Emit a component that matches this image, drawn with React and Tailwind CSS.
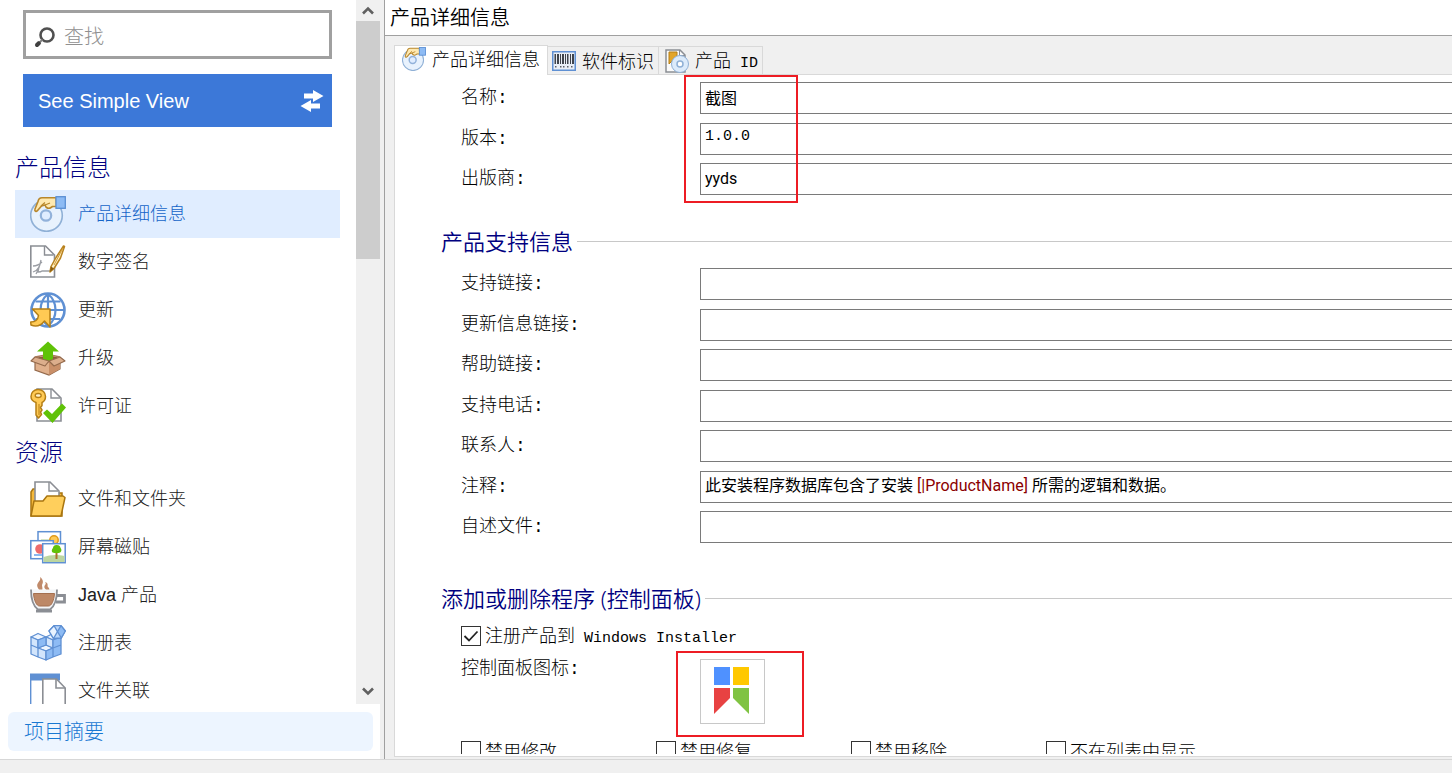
import { useState } from "react";
import clsx from "clsx";

const DiscHandIcon = ({ size = 36 }) => (
  <svg width={size} height={size} viewBox="0 0 36 36" fill="none" aria-hidden="true">
    <circle cx="16.5" cy="19.5" r="15.8" fill="#e8f2fd" stroke="#8fb0d6" strokeWidth="1.6" />
    <circle cx="16" cy="19.5" r="5.2" fill="#e0edff" stroke="#92b2da" strokeWidth="2.2" />
    <path
      d="M26 1.800H12C9.500 1.800 8.500 3 8 5.500L5 13c-.8 2.300 1.500 3.200 2.800 1.300L11.500 10l3.500-1c1 3.500 4 4 6 2.500l1.500-1h4Z"
      fill="#ffe9b0"
      stroke="#b8872c"
      strokeWidth="1.600"
      strokeLinejoin="round"
    />
    <path d="M11 10 15 6.500M15 9l5-2" stroke="#b8872c" strokeWidth="1.300" />
    <rect x="26" y=".7" width="9.300" height="11.600" fill="#8dbbf4" stroke="#5b8fd3" strokeWidth="1.300" />
  </svg>
);

const SignatureIcon = () => (
  <svg width="36" height="36" viewBox="0 0 36 36" fill="none" aria-hidden="true">
    <path d="M.8 2h14.700l9 9v22H.8Z" fill="#fff" stroke="#8b8e94" strokeWidth="1.600" />
    <path d="M14.500 2v9h9" stroke="#8b8e94" strokeWidth="1.400" />
    <path d="M11 16c-1 5-2 9-5 14M3 22c3 0 6-1 9-4M3 28c3-1 5-3 6-5l-1 5c2 0 3 0 4-1h8" stroke="#9b9ea4" strokeWidth="1.300" />
    <path
      d="M33.500 2 26 13.500l-5 9-1 5.500 4-3.500 6.500-10.500 4-11.500Z"
      fill="#fff0c4"
      stroke="#b8821f"
      strokeWidth="1.500"
      strokeLinejoin="round"
    />
    <path d="m21 22.500 3 2-4 3.500Z" fill="#8a5d10" />
    <path d="m33 4-9 17" stroke="#d49c35" />
  </svg>
);

const UpdateIcon = () => (
  <svg width="36" height="36" viewBox="0 0 36 36" fill="none" aria-hidden="true">
    <circle cx="18" cy="18" r="16.500" fill="#fff" stroke="#5f90d3" strokeWidth="2.600" />
    <path
      d="M18 2v32M2 18h32M5.500 9.500h25M6 27h24M18 2C8 10 8 26 18 34M18 2c10 8 10 24 0 32"
      stroke="#5f90d3"
      strokeWidth="2.200"
    />
    <path
      d="M2.500 17H20v18l-5.500-6C11 33.500 6 35 1 33l-.3-3C5 30 8 27.500 8.500 23.500Z"
      fill="#ffca54"
      stroke="#b57f16"
      strokeWidth="1.500"
      strokeLinejoin="round"
    />
  </svg>
);

const UpgradeIcon = () => (
  <svg width="36" height="36" viewBox="0 0 36 36" fill="none" aria-hidden="true">
    <path d="M5 19v11l14 5 11-6V18l-11 4Z" fill="#e0b08c" stroke="#946a4c" strokeWidth="1.200" />
    <path d="M19 21v14l11-6V18Z" fill="#c98f68" />
    <path d="m5 18 14 4 11-4-11-3Z" fill="#8d5a3b" />
    <path d="m18 1.500 11 10h-6V20l-5 1.500L13 20v-8.500H7Z" fill="#5fc207" />
    <path
      d="m5 17 14 4-4 5L1 21ZM30 17l5 4-11 5-5-5Z"
      fill="#dcae8c"
      stroke="#946a4c"
      strokeWidth="1.200"
      strokeLinejoin="round"
    />
    <path d="m5 17 8-1.500M30 17l-7-1.500" stroke="#a97b5a" strokeWidth="1.500" />
  </svg>
);

const LicenseIcon = () => (
  <svg width="36" height="36" viewBox="0 0 36 36" fill="none" aria-hidden="true">
    <path d="M7 1h15l9 9v23H7Z" fill="#fff" stroke="#8b8e94" strokeWidth="1.600" />
    <path d="M21 1v9h9" stroke="#8b8e94" strokeWidth="1.400" />
    <path
      d="M8 1.500c4.500 0 7.500 3 7.500 7 0 3-1.300 5-3.500 6v3l-1.500 2L12 22l-1.500 2 1 2.500L8.500 30 6 27V14.500c-3-1-5-3-5-6 0-4 3-7 7-7Z"
      fill="#ffca54"
      stroke="#b57f16"
      strokeWidth="1.500"
      strokeLinejoin="round"
    />
    <ellipse cx="8.200" cy="7.500" rx="3" ry="2" fill="#fff3d0" stroke="#b57f16" strokeWidth="1.300" />
    <path d="M9 16v11" stroke="#b57f16" />
    <path d="m13 25 4-3.500 5 4.500L32 15.500l4 4L22.500 35Z" fill="#5fc207" />
  </svg>
);

const FolderIcon = () => (
  <svg width="36" height="36" viewBox="0 0 36 36" fill="none" aria-hidden="true">
    <path d="M1 35V11l2-3h8l2 4h19v23Z" fill="#f5b93c" stroke="#a9750f" strokeWidth="1.500" />
    <path d="M5 1h15l9 9v13H5Z" fill="#fff" stroke="#8b8e94" strokeWidth="1.600" />
    <path d="M19 1v9h9" stroke="#8b8e94" strokeWidth="1.400" />
    <path
      d="M1 35 4 20h9l4-5h16l2 1.500L31 35Z"
      fill="#ffcf5c"
      stroke="#a9750f"
      strokeWidth="1.500"
      strokeLinejoin="round"
    />
  </svg>
);

const TilesIcon = () => (
  <svg width="36" height="36" viewBox="0 0 36 36" fill="none" aria-hidden="true">
    <rect x="8" y="2.700" width="22.500" height="14" fill="#fff" stroke="#5f90d3" strokeWidth="1.500" />
    <path d="M11 10h18v3H11Z" fill="#dbe9c4" />
    <circle cx="24" cy="11" r="4.200" fill="#ffca54" stroke="#e09a1c" strokeWidth="1.500" />
    <rect x=".8" y="11.700" width="22.500" height="18" fill="#fff" stroke="#5f90d3" strokeWidth="1.500" />
    <circle cx="10" cy="20" r="4.800" fill="#ee6b6b" />
    <circle cx="16" cy="18.500" r="3" fill="#ffca7a" />
    <path d="M4 26h9" stroke="#7fb0ee" strokeWidth="1.800" />
    <rect x="12.700" y="14.700" width="22.500" height="19" fill="#fff" stroke="#5f90d3" strokeWidth="1.500" />
    <path d="M13.500 28c6-2 12-3 21-1v6h-21Z" fill="#bcd6a0" />
    <path d="M26.500 22v8" stroke="#a8742a" strokeWidth="2" />
    <path
      d="M26.500 16c3 0 4 1.500 4 3 2 2 .5 5-2 5h-4c-3 0-3.500-3-1.500-5 0-1.500 1-3 3.500-3Z"
      fill="#5fc207"
    />
  </svg>
);

const JavaIcon = () => (
  <svg width="36" height="36" viewBox="0 0 36 36" fill="none" aria-hidden="true">
    <path
      d="M10 14c-2-3-4-5-2-8 1-2 3-3 2-6 4 3 3 6 2 8 0 2 1 3 0 6ZM17 14c-1-2-4-3-2-6 1-1 1-1.500 0-3 4 1 2 4 3 5s2 2 1 4Z"
      fill="#c08a6a"
    />
    <path d="M1 12.500C1 23 3 29 8 32.500h12c5-3.500 7-9.500 7-20" fill="#f4f5f7" stroke="#8b8e94" strokeWidth="1.800" />
    <path d="M3.500 16.500h21c-.5 7-3 12.500-6 12.500h-9c-3 0-5.500-5.500-6-12.500Z" fill="#bd8867" stroke="#a36f50" />
    <path d="M27 18.500h7.500v6.500H26" stroke="#8b8e94" strokeWidth="2.800" />
    <path d="M6 34h16" stroke="#8b8e94" strokeWidth="3" />
  </svg>
);

const RegistryIcon = () => (
  <svg
    width="36"
    height="36"
    viewBox="0 0 36 36"
    fill="none"
    stroke="#5f90d3"
    strokeWidth="1.300"
    strokeLinejoin="round"
    aria-hidden="true"
  >
    <path d="m1 12 7-3.500 8 3.500-8 3ZM16 12l7-3.500 8 3.500-8 3ZM8 23l8-3 7 3-7 3Z" fill="#edf5ff" />
    <path d="m1 12 7 3v8l-7-3ZM16 12l7 3v8l-7-3ZM1 20l7 3v9l-7-3ZM8 23l8 3v9l-8-3Z" fill="#d2e5fc" />
    <path d="m8 15 8-3v8l-8 3ZM23 15l8-3v8l-8 3ZM16 26l7-3v9l-7 3ZM23 23l8-3v9l-8 3Z" fill="#8dbbf4" />
    <path d="m19 6 5-5.300h7L35.300 6l-4 7-8 .5Z" fill="#b9d6fa" />
    <path d="m24 .7 3.500 6-4 6.800L19 6Z" fill="#e9f3ff" />
    <path d="m27.500 6.700 3.500-6L35.300 6l-4 7Z" fill="#8dbbf4" />
  </svg>
);

const FileAssocIcon = () => (
  <svg width="36" height="36" viewBox="0 0 36 36" fill="none" aria-hidden="true">
    <path d="M.7 1h28.500v35H.7Z" fill="#fff" />
    <path d="M.7 1v35" stroke="#5f90d3" strokeWidth="1.400" />
    <path d="M0 .5h30v7H0Z" fill="#5f90d3" />
    <path d="M12.800 6h13.700l8.700 9v21H12.800Z" fill="#fff" stroke="#8b8e94" strokeWidth="1.600" />
    <path d="M26 6v9h9" stroke="#8b8e94" strokeWidth="1.600" />
  </svg>
);

const BarcodeIcon = () => (
  <svg width="24" height="20" viewBox="0 0 24 20" aria-hidden="true">
    <rect x=".75" y=".75" width="22.500" height="18.500" fill="#e8eef6" stroke="#5f90d3" strokeWidth="1.500" />
    <path
      d="M2.500 3h1.500v10H2.500ZM5 3h2v10H5ZM8 3h1v10H8ZM10 3h2v10h-2ZM13 3h1v10h-1ZM15 3h1.500v10H15ZM18 3h1v10h-1ZM20 3h2v10h-2Z"
      fill="#3f444c"
    />
    <path
      d="M3 15h1.500v1.500H3ZM8 15h1.500v1.500H8ZM11 15h1.500v1.500H11ZM15 15h1.500v1.500H15ZM19 15h1.500v1.500H19Z"
      fill="#5c6068"
    />
  </svg>
);

const ProductIdIcon = () => (
  <svg width="26" height="24" viewBox="-2 0 26 24" fill="none" aria-hidden="true">
    <path d="M1 1h14l5 5v17H1Z" fill="#fafafa" stroke="#8b8e94" strokeWidth="1.500" />
    <path d="M14.500 1v5.500H20" stroke="#8b8e94" />
    <path d="M4 3h8v4l-8 8Z" fill="#e2a52b" stroke="#b57f16" />
    <circle cx="15" cy="15" r="8.500" fill="#dcebfb" stroke="#8fb0d6" />
    <circle cx="15" cy="15" r="3" fill="#fff" stroke="#8fb0d6" strokeWidth="1.500" />
  </svg>
);

const SearchIcon = () => (
  <svg width="22" height="22" viewBox="0 0 22 22" fill="none" aria-hidden="true">
    <circle cx="13" cy="9" r="6.500" stroke="#505050" strokeWidth="2.600" />
    <path d="m3 19 2-2" stroke="#404040" strokeWidth="4" strokeLinecap="round" />
    <path d="m6 16 2.500-2.500" stroke="#808080" strokeWidth="1.800" />
  </svg>
);

const SwapIcon = () => (
  <svg width="24" height="22" viewBox="0 0 24 22" fill="#fff" aria-hidden="true">
    <path d="M4 3.500h9V0l10.500 6L13 12V8.500H4ZM20 13.500h-9V10L.5 16 11 22v-3.500h9Z" />
  </svg>
);

const Chevron = ({ down }) => (
  <svg width="12" height="9" viewBox="0 0 12 9" fill="none" aria-hidden="true">
    <path d={down ? "m1 1.500 5 5 5-5" : "m1 7.500 5-5 5 5"} stroke="#606060" strokeWidth="2.600" />
  </svg>
);

const GROUPS = [
  {
    title: "产品信息",
    items: [
      { label: "产品详细信息", Icon: DiscHandIcon },
      { label: "数字签名", Icon: SignatureIcon },
      { label: "更新", Icon: UpdateIcon },
      { label: "升级", Icon: UpgradeIcon },
      { label: "许可证", Icon: LicenseIcon },
    ],
  },
  {
    title: "资源",
    items: [
      { label: "文件和文件夹", Icon: FolderIcon },
      { label: "屏幕磁贴", Icon: TilesIcon },
      { label: "Java 产品", Icon: JavaIcon },
      { label: "注册表", Icon: RegistryIcon },
      { label: "文件关联", Icon: FileAssocIcon },
    ],
  },
];

const SUPPORT_FIELDS = [
  { id: "support-link", label: "支持链接:" },
  { id: "update-link", label: "更新信息链接:" },
  { id: "help-link", label: "帮助链接:" },
  { id: "support-phone", label: "支持电话:" },
  { id: "contact", label: "联系人:" },
  { id: "comments", label: "注释:", highlighted: true },
  { id: "readme", label: "自述文件:" },
];

const DISABLE_OPTIONS = ["禁用修改", "禁用修复", "禁用移除", "不在列表中显示"];

const Sidebar = () => {
  const [selected, setSelected] = useState("产品详细信息");

  return (
    <aside className="flex w-[380px] shrink-0 flex-col bg-white">
      <div className="flex min-h-0 flex-1">
        <div className="min-w-0 flex-1 overflow-hidden pr-4 pl-[15px]">
          <div className="mx-2 mt-[10px] flex h-[49px] items-center border-3 border-[#a0a0a0] pt-1 pl-2">
            <label htmlFor="search" aria-label="查找">
              <SearchIcon />
            </label>
            <input
              id="search"
              type="text"
              placeholder="查找"
              className="ml-2 min-w-0 flex-1 text-xl font-light outline-none placeholder:text-[#909090]"
            />
          </div>
          <button className="mx-2 mt-[15px] flex h-[53px] w-[309px] items-center justify-between bg-[#3c78d8] pr-2 pl-[15px] font-['Liberation_Sans',sans-serif] text-xl text-white">
            See Simple View
            <SwapIcon />
          </button>
          <nav className="mt-[18px]">
            {GROUPS.map(({ title, items }) => (
              <section key={title}>
                <h2 className="flex h-[45px] items-center pb-[2px] text-2xl font-light text-[#000080]">
                  {title}
                </h2>
                {items.map(({ label, Icon }) => (
                  <button
                    key={label}
                    className={clsx(
                      "flex h-12 w-full items-center gap-3 pl-[15px] font-['Liberation_Sans','Noto_Sans_CJK_SC',sans-serif] text-lg font-light",
                      selected === label
                        ? "bg-[#e0edff] text-[#1464c8]"
                        : "text-[#202020]",
                    )}
                    onClick={() => setSelected(label)}
                  >
                    <Icon />
                    {label}
                  </button>
                ))}
              </section>
            ))}
          </nav>
        </div>
        <div className="flex w-6 shrink-0 flex-col items-center bg-[#f0f0f0]">
          <button aria-label="Scroll up" className="flex h-[21px] items-center">
            <Chevron />
          </button>
          <div className="h-[238px] w-full bg-[#cdcdcd]" />
          <button aria-label="Scroll down" className="mt-auto flex h-[26px] items-center">
            <Chevron down />
          </button>
        </div>
      </div>
      <button className="mx-2 my-2 h-[39px] w-[365px] rounded-md bg-[#edf5ff] pl-4 text-left text-xl font-light text-[#1978d2]">
        项目摘要
      </button>
    </aside>
  );
};

const FieldRow = ({ id, label, children }) => (
  <div className="flex h-8 items-center odd:mb-[9px] even:mb-2">
    <label
      htmlFor={id}
      className="w-[239px] shrink-0 font-['Liberation_Mono','Noto_Sans_CJK_SC',monospace] text-lg font-light"
    >
      {label}
    </label>
    {children}
  </div>
);

const TextInput = ({ className, ...props }) => (
  <input
    type="text"
    className={clsx(
      "h-8 min-w-0 flex-1 border border-r-0 border-[#7a7a7a] px-1 outline-none",
      className,
    )}
    {...props}
  />
);

const INPUT_TEXT =
  "pb-[2px] font-['Roboto','Noto_Sans_CJK_SC',sans-serif] text-base font-normal";

// Input text is transparent, the coloured copy sits on top of it
const ReferenceInput = ({ id }) => {
  const [value, setValue] = useState(
    "此安装程序数据库包含了安装 [|ProductName] 所需的逻辑和数据。",
  );

  return (
    <div className="relative flex flex-1">
      <TextInput
        id={id}
        value={value}
        onChange={(e) => setValue(e.target.value)}
        className={clsx(INPUT_TEXT, "text-transparent caret-black")}
      />
      <div
        aria-hidden="true"
        className={clsx(
          INPUT_TEXT,
          "pointer-events-none absolute inset-0 flex items-center px-[5px] whitespace-pre",
        )}
      >
        {value.split(/(\[.*?\])/).map((part, i) => (
          <span key={i} className={part.startsWith("[") ? "text-[#8b0000]" : ""}>
            {part}
          </span>
        ))}
      </div>
    </div>
  );
};

const SectionTitle = ({ children }) => (
  <h2 className="flex h-7 items-center gap-1 pb-[2px] pl-[46px] text-[22px] font-[350] text-[#000080]">
    {children}
    <span className="h-px flex-1 bg-[#c8c8c8]" />
  </h2>
);

const CheckBox = ({ id, children, defaultChecked }) => (
  <div className="flex h-[22px] items-center gap-1">
    <span className="relative flex">
      <input
        id={id}
        type="checkbox"
        defaultChecked={defaultChecked}
        className="peer size-5 appearance-none border border-[#333] bg-white"
      />
      <svg
        className="pointer-events-none absolute inset-0 hidden peer-checked:block"
        viewBox="0 0 20 20"
        fill="none"
        aria-hidden="true"
      >
        <path d="m3.500 10 4.500 4.500L16.500 5.500" stroke="#222" strokeWidth="1.800" />
      </svg>
    </span>
    <label htmlFor={id} className="text-lg font-light whitespace-nowrap">
      {children}
    </label>
  </div>
);

const Tab = ({ icon, active, children }) => (
  <button
    role="tab"
    aria-selected={active}
    className={clsx(
      "flex items-center gap-[6px] border-t border-r border-[#d9d9d9] text-lg font-light",
      active
        ? "-mb-px h-[30px] border-l bg-white pr-[7px] pb-1 pl-[7px]"
        : "h-7 bg-[#f0f0f0] pr-1 pl-1",
    )}
  >
    {icon}
    <span className="whitespace-nowrap">{children}</span>
  </button>
);

const ProductDetails = () => (
  <main className="flex min-w-0 flex-1 flex-col border-l border-[#a0a0a0]">
    <h1 className="flex h-9 shrink-0 items-center border-b border-[#a0a0a0] bg-white pl-[5px] text-xl font-[350]">
      产品详细信息
    </h1>
    <div className="flex min-h-0 flex-1 flex-col pt-[9px] pl-[9px]">
      <div role="tablist" className="relative z-10 flex h-[29px] shrink-0 items-end">
        <Tab icon={<DiscHandIcon size={24} />} active>
          产品详细信息
        </Tab>
        <Tab icon={<BarcodeIcon />}>软件标识</Tab>
        <Tab icon={<ProductIdIcon />}>
          产品
          <span className="ml-[9px] font-['Liberation_Mono',monospace] text-[15px]">
            ID
          </span>
        </Tab>
      </div>
      <div className="mb-[2px] min-h-0 flex-1 border border-r-0 border-[#d9d9d9] bg-white pb-[2px]">
        <div className="h-full overflow-hidden pt-[7px]">
          <div className="relative pl-[66px]">
            <FieldRow id="name" label="名称:">
              <TextInput id="name" defaultValue="截图" className={INPUT_TEXT} />
            </FieldRow>
            <FieldRow id="version" label="版本:">
              <TextInput
                id="version"
                defaultValue="1.0.0"
                className="pb-[6px] font-['Liberation_Mono',monospace] text-[15px]"
              />
            </FieldRow>
            <FieldRow id="publisher" label="出版商:">
              <TextInput id="publisher" defaultValue="yyds" className={INPUT_TEXT} />
            </FieldRow>
            <div className="pointer-events-none absolute -top-[7px] left-[289px] h-32 w-[114px] border-2 border-[#ed1c24]" />
          </div>

          <div className="mt-[33px]">
            <SectionTitle>产品支持信息</SectionTitle>
          </div>
          <div className="mt-3 pl-[66px]">
            {SUPPORT_FIELDS.map(({ id, label, highlighted }) => (
              <FieldRow key={id} id={id} label={label}>
                {highlighted ? <ReferenceInput id={id} /> : <TextInput id={id} />}
              </FieldRow>
            ))}
          </div>

          <div className="mt-[42px]">
            <SectionTitle>添加或删除程序 (控制面板)</SectionTitle>
          </div>
          <div className="mt-3 pl-[66px]">
            <CheckBox id="register" defaultChecked>
              注册产品到
              <span className="ml-[9px] font-['Liberation_Mono',monospace] text-[15px]">
                Windows Installer
              </span>
            </CheckBox>
            <div className="relative mt-3 flex">
              <span className="w-[239px] font-['Liberation_Mono','Noto_Sans_CJK_SC',monospace] text-lg leading-5 font-light">
                控制面板图标:
              </span>
              <button
                aria-label="控制面板图标"
                className="flex size-[65px] border border-[#c8c8c8] bg-white pt-[7px] pl-[13px]"
              >
                <svg width="35" height="47" viewBox="0 0 35 47" aria-hidden="true">
                  <path d="M0 0h16v18H0Z" fill="#4f91ff" />
                  <path d="M19 0h16v18H19Z" fill="#ffc800" />
                  <path d="M0 21h16v10L0 47Z" fill="#e84242" />
                  <path d="M19 21h16v26L19 31Z" fill="#80c342" />
                </svg>
              </button>
              <div className="pointer-events-none absolute -top-2 left-[215px] h-[86px] w-32 border-2 border-[#ed1c24]" />
            </div>
            <div className="mt-4 grid grid-cols-[repeat(4,195px)]">
              {DISABLE_OPTIONS.map((option, i) => (
                <CheckBox key={option} id={`disable-${i}`}>
                  {option}
                </CheckBox>
              ))}
            </div>
          </div>
        </div>
      </div>
    </div>
  </main>
);

const App = () => (
  <div className="flex h-screen flex-col overflow-hidden bg-[#f0f0f0] font-['Noto_Sans','Noto_Sans_CJK_SC',sans-serif] text-black">
    <div className="flex min-h-0 flex-1 gap-1">
      <Sidebar />
      <ProductDetails />
    </div>
    <footer className="h-[14px] shrink-0 border-t border-[#d7d7d7]" />
  </div>
);

export default App;
